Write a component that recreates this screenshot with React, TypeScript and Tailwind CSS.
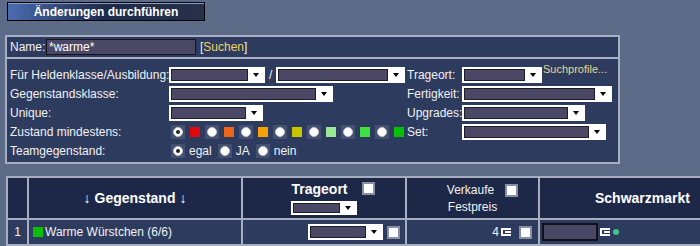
import React from 'react';

// dark inner colour used by every input
const inputBg = 'bg-[#4b4866]';

const Select = ({ w, h = 16 }: { w: number; h?: number }) => (
    <div className="flex shrink-0 bg-white p-[2px]" style={{ width: w, height: h }}>
        <div className={`flex-1 ${inputBg} border border-[#1e1e28]`}></div>
        <div className="w-[15px] flex items-center justify-center">
            <div className="w-0 h-0 border-l-[3.5px] border-r-[3.5px] border-t-[4px] border-l-transparent border-r-transparent border-t-black"></div>
        </div>
    </div>
);

const Radio = ({ checked = false }: { checked?: boolean }) => (
    <div className="w-[14px] h-[14px] bg-[#435071] flex items-center justify-center shrink-0">
        <div className="w-[10px] h-[10px] rounded-full bg-white border border-[#c8c8c8] flex items-center justify-center">
            {checked && <div className="w-[4px] h-[4px] rounded-full bg-[#202020]"></div>}
        </div>
    </div>
);

const Swatch = ({ color }: { color: string }) => (
    <div className="w-[10px] h-[10px] shrink-0" style={{ backgroundColor: color }}></div>
);

const Check = () => (
    <div className="w-[13px] h-[13px] bg-[#8a90a4] p-[2px] shrink-0">
        <div className="w-full h-full bg-white"></div>
    </div>
);

const Coins = () => (
    <svg width="12" height="8" viewBox="0 0 12 8" className="shrink-0">
        <path d="M11 1H2v6h9M5 4h6" stroke="white" strokeWidth="2" fill="none" />
    </svg>
);

const FilterRow = ({
    label,
    left,
    rightLabel,
    right,
}: {
    label: string;
    left: React.ReactNode;
    rightLabel?: string;
    right?: React.ReactNode;
}) => (
    <div className="flex items-center h-[19px] whitespace-nowrap">
        <div className="w-[162px] pl-[3px] shrink-0">{label}</div>
        <div className="w-[238px] flex items-center shrink-0">{left}</div>
        <div className="w-[55px] shrink-0">{rightLabel}</div>
        <div className="flex items-center">{right}</div>
    </div>
);

const zustand = ['#e00808', '#f06418', '#f8a008', '#c8c400', '#98e898', '#40e040', '#08c008'];

export default function App() {
    return (
        <div
            className="w-[700px] h-[246px] overflow-hidden bg-[#5c6b88] text-[12px] text-[#f2f2f2] leading-none"
            style={{ fontFamily: '"Liberation Sans", Arial, sans-serif' }}
        >
            {/* Action button */}
            <div className="pt-[2px] pl-[7px]">
                <div className="w-[198px] h-[19px] border border-black bg-gradient-to-r from-[#4a6cb0] via-[#1d2a4a] to-[#27314a] flex items-center justify-center shadow-[inset_0_1px_0_#8a9cc8]">
                    <span className="font-bold text-white text-[12px]">Änderungen durchführen</span>
                </div>
            </div>

            {/* Search box */}
            <div className="mt-[14px] ml-[5px] w-[615px] border-2 border-[#a7aebf] bg-[#2d3b5f] relative">
                <div className="h-[20px] flex items-center pl-[3px]">
                    <span className="w-[36px]">Name:</span>
                    <div className={`w-[150px] h-[16px] ${inputBg} border border-[#15151f] flex items-center pl-[2px] text-white`}>
                        *warme*
                    </div>
                    <span className="ml-[4px]">
                        [<span className="text-[#ecd468]">Suchen</span>]
                    </span>
                </div>
                <div className="h-[2px] bg-[#a7aebf]"></div>
                <div className="pt-[6px] pb-[2px]">
                    <FilterRow
                        label="Für Heldenklasse/Ausbildung:"
                        left={
                            <>
                                <Select w={96} />
                                <span className="mx-[4px]">/</span>
                                <Select w={129} />
                            </>
                        }
                        rightLabel="Trageort:"
                        right={<Select w={80} />}
                    />
                    <FilterRow
                        label="Gegenstandsklasse:"
                        left={<Select w={164} />}
                        rightLabel="Fertigkeit:"
                        right={<Select w={150} />}
                    />
                    <FilterRow
                        label="Unique:"
                        left={<Select w={94} />}
                        rightLabel="Upgrades:"
                        right={<Select w={123} />}
                    />
                    <FilterRow
                        label="Zustand mindestens:"
                        left={
                            <div className="flex items-center gap-[5px] pl-[2px]">
                                {zustand.map((c, i) => (
                                    <React.Fragment key={c}>
                                        <Radio checked={i === 0} />
                                        <Swatch color={c} />
                                    </React.Fragment>
                                ))}
                            </div>
                        }
                        rightLabel="Set:"
                        right={<Select w={144} />}
                    />
                    <FilterRow
                        label="Teamgegenstand:"
                        left={
                            <div className="flex items-center pl-[2px]">
                                <Radio checked />
                                <span className="ml-[4px] mr-[6px]">egal</span>
                                <Radio />
                                <span className="ml-[4px] mr-[6px]">JA</span>
                                <Radio />
                                <span className="ml-[4px]">nein</span>
                            </div>
                        }
                    />
                </div>
                <div className="absolute top-[27px] left-[536px] text-[11px] text-[#e6d78c]">Suchprofile...</div>
            </div>

            {/* Result table */}
            <div className="mt-[12px] ml-[6px] w-[760px] grid grid-cols-[19px_212px_162px_131px_240px] gap-[2px] p-[2px] bg-[#a7aebf]">
                <div className="h-[40px] bg-[#1d2848]"></div>
                <div className="bg-[#1d2848] flex items-center justify-center font-bold text-[14px] text-white gap-[4px]">
                    <span className="font-normal">↓</span>Gegenstand<span className="font-normal">↓</span>
                </div>
                <div className="bg-[#1d2848] flex flex-col items-center justify-center gap-[5px]">
                    <div className="flex items-center gap-[14px] pl-[18px]">
                        <span className="font-bold text-[14px] text-white">Trageort</span>
                        <Check />
                    </div>
                    <Select w={66} h={14} />
                </div>
                <div className="bg-[#1d2848] flex flex-col items-center justify-center gap-[4px]">
                    <div className="flex items-center gap-[11px] pl-[20px]">
                        <span>Verkaufe</span>
                        <Check />
                    </div>
                    <span>Festpreis</span>
                </div>
                <div className="bg-[#1d2848] flex items-center pl-[55px] font-bold text-[14px] text-white">Schwarzmarkt</div>

                <div className="h-[24px] bg-[#2d3b5f] flex items-center justify-center">1</div>
                <div className="bg-[#2d3b5f] flex items-center pl-[4px] gap-[2px]">
                    <Swatch color="#08c008" />
                    <span>Warme Würstchen (6/6)</span>
                </div>
                <div className="bg-[#2d3b5f] flex items-center justify-end pr-[5px] gap-[4px]">
                    <Select w={75} />
                    <Check />
                </div>
                <div className="bg-[#2d3b5f] flex items-center justify-end pr-[6px] gap-[1px]">
                    <span>4</span>
                    <Coins />
                    <div className="ml-[6px]">
                        <Check />
                    </div>
                </div>
                <div className="bg-[#2d3b5f] flex items-center pl-[2px] gap-[1px]">
                    <div className={`w-[56px] h-[18px] ${inputBg} border-2 border-[#111118]`}></div>
                    <Coins />
                    <div className="w-[6px] h-[6px] rounded-full bg-[#3fc48a] ml-[1px]"></div>
                </div>
            </div>
        </div>
    );
}
